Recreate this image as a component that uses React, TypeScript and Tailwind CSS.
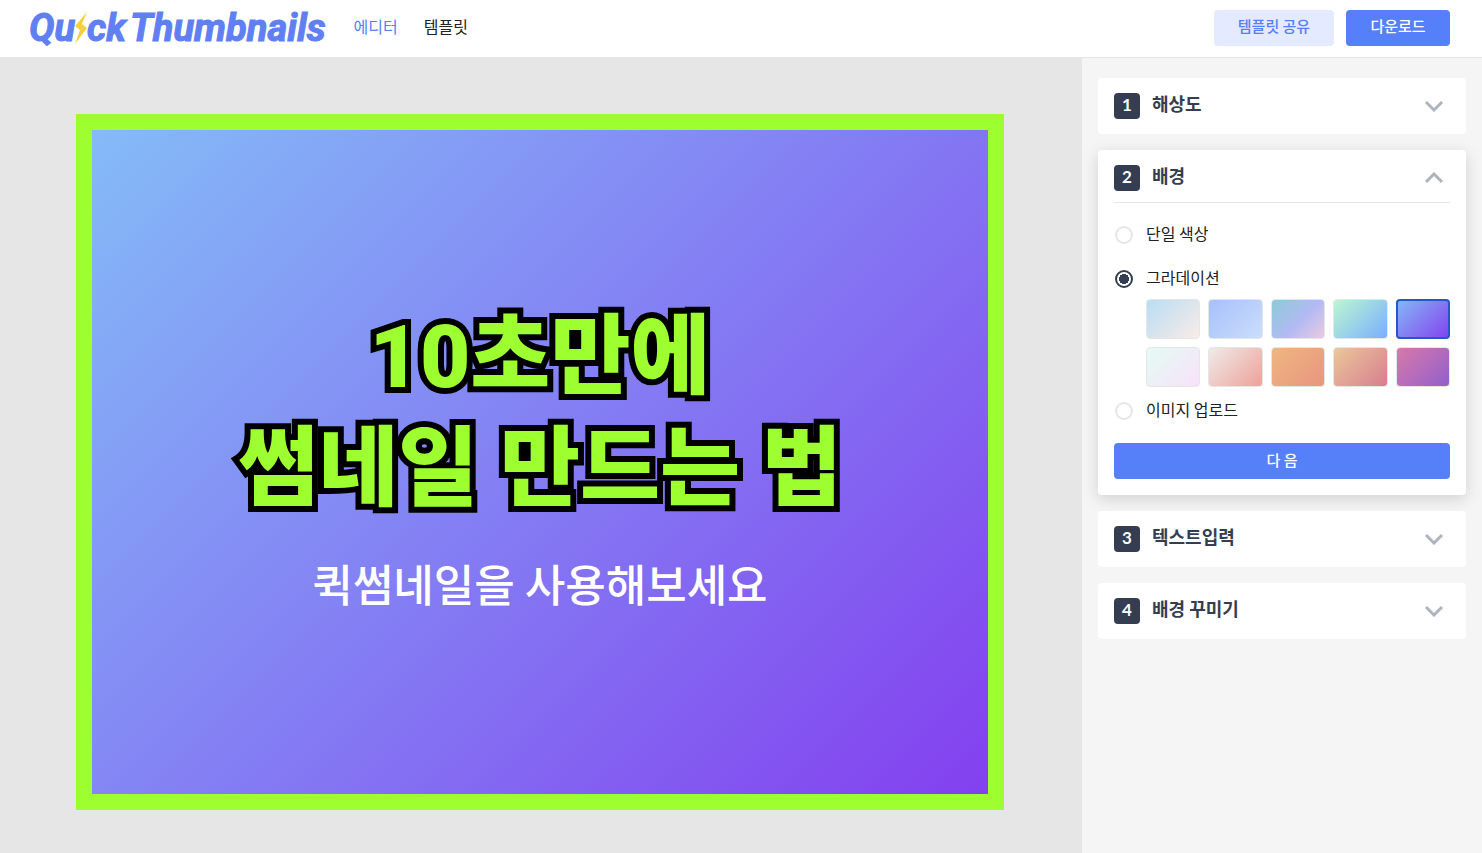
import { useState } from "react";
import type { ReactNode } from "react";
import clsx from "clsx";

const GRADIENTS = [
  "bg-[linear-gradient(135deg,#b8dcf5,#fbece6)]",
  "bg-[linear-gradient(135deg,#a6bffc,#cbdffb)]",
  "bg-[linear-gradient(135deg,#8acbd8,#b3baf3_55%,#eecbe0)]",
  "bg-[linear-gradient(135deg,#bdf8d0,#78adff)]",
  "bg-[linear-gradient(135deg,#84bbf7,#8340ef)]",
  "bg-[linear-gradient(135deg,#e3fdf3,#f9e0fa)]",
  "bg-[linear-gradient(135deg,#f0eceb,#eda097)]",
  "bg-[linear-gradient(135deg,#eeb780,#e89580)]",
  "bg-[linear-gradient(135deg,#ebc99a,#d77c90)]",
  "bg-[linear-gradient(135deg,#d97aa8,#905fce)]",
];

type BackgroundType = "solid" | "gradient" | "image";

function Logo() {
  return (
    <a
      href="#"
      aria-label="Quick Thumbnails"
      className="flex items-center font-['Roboto',sans-serif] text-[38px] font-bold italic leading-[50px] text-[#5f7ff2] [-webkit-text-stroke:1px_#5f7ff2]"
    >
      <span>Qu</span>
      <svg viewBox="0 0 12 34" className="h-[34px] w-3" aria-hidden="true">
        <path d="M12 1 0 15l5 4L0 33 12 17l-5-4z" fill="#f5d03e" />
      </svg>
      <span>ck</span>
      <span className="ml-1">Thumbnails</span>
    </a>
  );
}

function Chevron({ open }: { open?: boolean }) {
  return (
    <svg viewBox="0 0 20 12" className="mr-1.5 h-3 w-5" fill="none" stroke="#adb4bf" strokeWidth="3" aria-hidden="true">
      <path d={open ? "M2 10l8-8 8 8" : "M2 2l8 8 8-8"} />
    </svg>
  );
}

function Section({
  step,
  title,
  open,
  children,
}: {
  step: number;
  title: string;
  open?: boolean;
  children?: ReactNode;
}) {
  return (
    <section className={clsx("rounded bg-white px-4", open && "pb-4 shadow-[0_4px_16px_rgba(0,0,0,0.15)]")}>
      <button
        type="button"
        aria-expanded={!!open}
        className={clsx(
          "flex w-full items-center text-left",
          open ? "h-[53px] border-b border-[#e6e6e6] pt-1" : "h-14"
        )}
      >
        <span className="flex size-[26px] items-center justify-center rounded bg-[#343d52] pb-0.5 font-['Lato',sans-serif] text-[17px] font-bold leading-6 text-white">
          {step}
        </span>
        <span className="ml-3 flex-1 pb-1.5 text-lg font-bold leading-6 text-[#343d52]">{title}</span>
        <Chevron open={open} />
      </button>
      {children}
    </section>
  );
}

function RadioRow({
  label,
  checked,
  onSelect,
}: {
  label: string;
  checked: boolean;
  onSelect: () => void;
}) {
  return (
    <label className="flex h-6 items-center gap-3 text-base leading-6 text-[#222]">
      <span className="flex size-5 items-center justify-center">
        <input
          type="radio"
          name="background"
          checked={checked}
          onChange={onSelect}
          className="size-[18px] appearance-none rounded-full border-2 border-[#e6e6e6] bg-white checked:border-[#343d52] checked:bg-[radial-gradient(circle,#343d52_5px,white_5px)]"
        />
      </span>
      <span className="pb-1">{label}</span>
    </label>
  );
}

export default function App() {
  const [type, setType] = useState<BackgroundType>("gradient");
  const [selected, setSelected] = useState(4);

  return (
    <div className="flex min-h-screen flex-col bg-[#f5f5f5] font-['Noto_Sans_CJK_KR',sans-serif]">
      <header className="flex h-[58px] items-center justify-between border-b border-[#e6e6e6] bg-white pr-8 pb-0.5 pl-[29px]">
        <div className="flex items-center">
          <Logo />
          <nav className="ml-7 flex gap-[26px] pb-1 text-base leading-6">
            <a href="#editor" className="text-[#5580fa]">에디터</a>
            <a href="#templates" className="text-[#222]">템플릿</a>
          </nav>
        </div>
        <div className="flex gap-3">
          <button type="button" className="h-9 w-[120px] rounded bg-[#e4eaff] pb-0.5 text-[15px] font-medium text-[#5580fa]">
            템플릿 공유
          </button>
          <button type="button" className="h-9 w-[104px] rounded bg-[#5580fa] pb-0.5 text-[15px] font-medium text-white">
            다운로드
          </button>
        </div>
      </header>

      <div className="flex flex-1">
        <main className="flex flex-1 items-start justify-center bg-[#e6e6e6] pt-14 pr-8 pl-[30px]">
          <div
            className={clsx(
              "flex aspect-4/3 w-full max-w-[928px] flex-col items-center justify-center border-16 border-[#9dff30] pb-2.5 text-center",
              GRADIENTS[selected]
            )}
          >
            <h1 className="font-['Roboto','Noto_Sans_CJK_KR',sans-serif] text-[87px] font-black leading-[112px] text-[#9dff30] [-webkit-text-stroke:12px_black] [paint-order:stroke_fill]">
              10초만에
              <br />
              썸네일 만드는 법
            </h1>
            <p className="mt-7 text-[44px] font-medium leading-[60px] text-white">퀵썸네일을 사용해보세요</p>
          </div>
        </main>

        <aside className="flex w-[400px] flex-col gap-4 px-4 py-5">
          <Section step={1} title="해상도" />
          <Section step={2} title="배경" open>
            <div className="pt-5">
              <RadioRow label="단일 색상" checked={type === "solid"} onSelect={() => setType("solid")} />
              <div className="mt-5">
                <RadioRow label="그라데이션" checked={type === "gradient"} onSelect={() => setType("gradient")} />
              </div>
              <div className="mt-2 grid grid-cols-5 gap-2 pl-8">
                {GRADIENTS.map((gradient, i) => (
                  <button
                    key={gradient}
                    type="button"
                    aria-label={`그라데이션 ${i + 1}`}
                    onClick={() => setSelected(i)}
                    className={clsx(
                      "h-10 rounded bg-origin-border",
                      gradient,
                      i === selected ? "border-2 border-[#2856c8]" : "border border-[#e6e6e6]"
                    )}
                  />
                ))}
              </div>
              <div className="mt-3">
                <RadioRow label="이미지 업로드" checked={type === "image"} onSelect={() => setType("image")} />
              </div>
              <button type="button" className="mt-5 h-9 w-full rounded bg-[#5580fa] pb-0.5 text-[15px] font-medium text-white">
                다 음
              </button>
            </div>
          </Section>
          <Section step={3} title="텍스트입력" />
          <Section step={4} title="배경 꾸미기" />
        </aside>
      </div>
    </div>
  );
}
